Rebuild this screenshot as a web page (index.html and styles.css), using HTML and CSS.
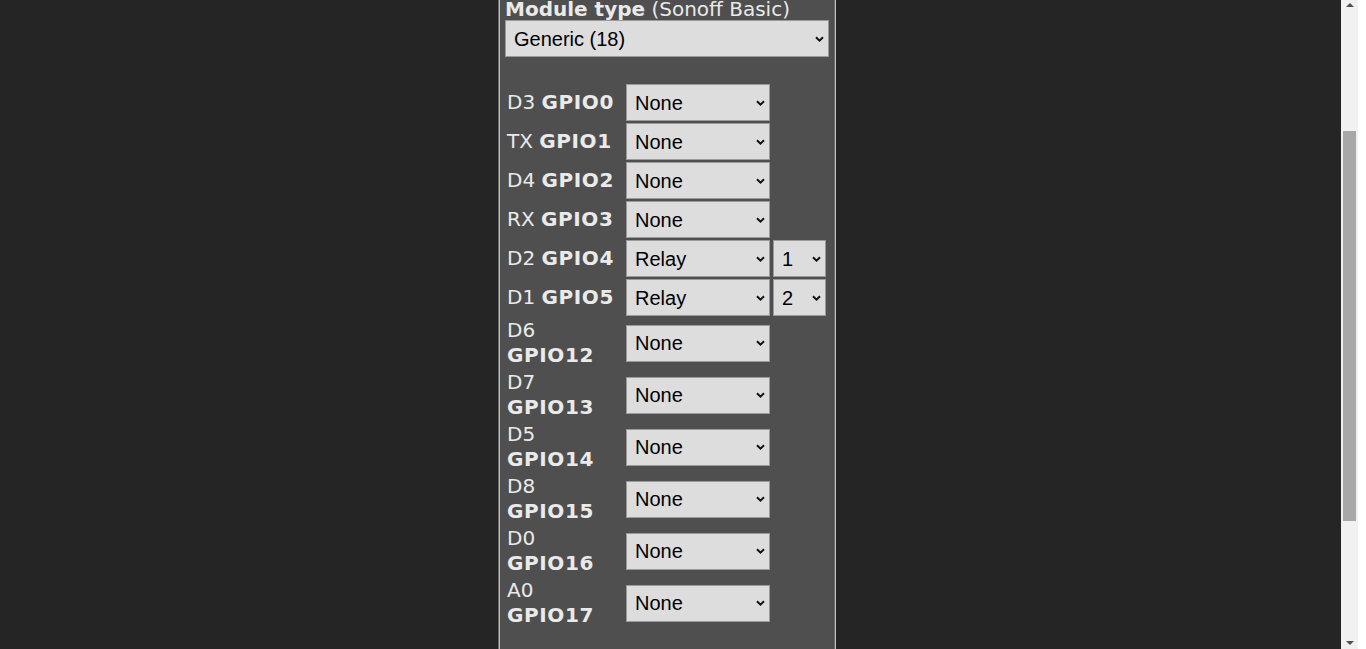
FILE: index.html
```html
<!DOCTYPE html>
<html lang="en">
<head>
<meta charset="utf-8">
<title>Sonoff Basic - Configure Module</title>
<link rel="stylesheet" href="styles.css">
</head>
<body>
<div class="page">
  <div class="wrap">
    <header class="head">
      <h3 class="head-sub">Sonoff Basic Module</h3>
      <h2 class="head-title">Sonoff</h2>
    </header>
    <fieldset class="panel">
      <legend class="legend"><b>&nbsp;Module parameters&nbsp;</b></legend>
      <div class="mt-label"><b>Module type</b> (Sonoff Basic)</div>
      <select id="mt" class="sel sel-wide"><option>Generic (18)</option></select>
      <div class="gpio">
        <div class="lbl">D3 <b>GPIO0</b></div><select class="sel"><option>None</option></select><span class="empty"></span>
        <div class="lbl">TX <b>GPIO1</b></div><select class="sel"><option>None</option></select><span class="empty"></span>
        <div class="lbl">D4 <b>GPIO2</b></div><select class="sel"><option>None</option></select><span class="empty"></span>
        <div class="lbl">RX <b>GPIO3</b></div><select class="sel"><option>None</option></select><span class="empty"></span>
        <div class="lbl">D2 <b>GPIO4</b></div><select class="sel"><option>Relay</option></select><select class="sel sel-idx"><option>1</option></select>
        <div class="lbl">D1 <b>GPIO5</b></div><select class="sel"><option>Relay</option></select><select class="sel sel-idx"><option>2</option></select>
        <div class="lbl">D6 <b>GPIO12</b></div><select class="sel"><option>None</option></select><span class="empty"></span>
        <div class="lbl">D7 <b>GPIO13</b></div><select class="sel"><option>None</option></select><span class="empty"></span>
        <div class="lbl">D5 <b>GPIO14</b></div><select class="sel"><option>None</option></select><span class="empty"></span>
        <div class="lbl">D8 <b>GPIO15</b></div><select class="sel"><option>None</option></select><span class="empty"></span>
        <div class="lbl">D0 <b>GPIO16</b></div><select class="sel"><option>None</option></select><span class="empty"></span>
        <div class="lbl">A0 <b>GPIO17</b></div><select class="sel"><option>None</option></select><span class="empty"></span>
      </div>
      <button class="btn btn-save" type="button">Save</button>
    </fieldset>
    <button class="btn btn-cfg" type="button">Configuration</button>
    <footer class="foot">Tasmota 6.5.0 by Theo Arends</footer>
  </div>
</div>
<aside class="vscroll" aria-hidden="true">
  <div class="vscroll-track">
    <span class="vscroll-arrow vscroll-up"></span>
    <span class="vscroll-thumb"></span>
    <span class="vscroll-arrow vscroll-down"></span>
  </div>
</aside>
<script src="script.js"></script>
</body>
</html>
```

FILE: styles.css
```css
html {
  background: #252525;
}
body {
  margin: 0;
  background: #252525;
  color: #eaeaea;
  font-family: "DejaVu Sans", Verdana, sans-serif;
  font-size: 20px;
}
.page {
  display: flex;
  justify-content: center;
  padding: 8px 25px 12px 0;
}
.wrap {
  width: 345px;
}
.head {
  text-align: center;
}
.head-sub {
  margin: 0 0 6px;
  font-size: 23px;
}
.head-title {
  margin: 0 0 18px;
  font-size: 30px;
}
.panel {
  width: 338px;
  box-sizing: border-box;
  margin: 0;
  padding: 0 5px 12px;
  border: 2px groove #c0c0c0;
  background: #4f4f4f;
}
.legend {
  padding: 0;
  text-align: left;
}
.mt-label {
  margin-top: 44px;
  line-height: 22px;
}
.sel {
  -webkit-appearance: none;
  appearance: none;
  display: block;
  box-sizing: border-box;
  height: 37px;
  width: 144px;
  margin: 0;
  padding: 0 20px 0 8px;
  border: 1px solid #9a9a9a;
  border-radius: 0;
  background-color: #dddddd;
  background-image: url("data:image/svg+xml,%3Csvg xmlns='http://www.w3.org/2000/svg' width='9' height='6' viewBox='0 0 9 6'%3E%3Cpath d='M1 1.2 4.5 4.6 8 1.2' fill='none' stroke='%23111' stroke-width='2'/%3E%3C/svg%3E");
  background-repeat: no-repeat;
  background-position: right 4px center;
  color: #000;
  font-family: "Liberation Sans", Arial, sans-serif;
  font-size: 20px;
}
.sel-wide {
  width: 324px;
}
.sel-idx {
  width: 53px;
}
.gpio {
  display: grid;
  grid-template-columns: 116px 144px 53px;
  column-gap: 3px;
  row-gap: 2px;
  align-items: center;
  margin-top: 27px;
  padding-left: 2px;
}
.lbl {
  line-height: 25px;
}
.lbl b {
  letter-spacing: 0.6px;
}
.btn {
  display: block;
  width: 100%;
  height: 46px;
  border: 0;
  border-radius: 5px;
  color: #faffff;
  font-family: "DejaVu Sans", Verdana, sans-serif;
  font-size: 24px;
}
.btn-save {
  margin-top: 25px;
  background: #47c266;
}
.btn-cfg {
  width: 338px;
  margin-top: 25px;
  background: #1fa3ec;
}
.foot {
  margin-top: 20px;
  padding-top: 8px;
  border-top: 1px solid #888;
  text-align: right;
  font-size: 14px;
  color: #aaa;
}

/* window scrollbar, drawn over the right edge of the viewport */
.vscroll {
  position: fixed;
  top: 0;
  right: 0;
  bottom: 0;
  width: 25px;
  background: #ffffff;
}
.vscroll-track {
  position: relative;
  width: 17px;
  height: 100%;
  background: #f1f1f1;
}
.vscroll-thumb {
  position: absolute;
  top: 131px;
  left: 2px;
  width: 13px;
  height: 390px;
  background: #a8a8a8;
}
.vscroll-arrow {
  position: absolute;
  left: 5px;
  width: 0;
  height: 0;
  border-left: 4px solid transparent;
  border-right: 4px solid transparent;
}
.vscroll-up {
  top: 3px;
  border-bottom: 4px solid #505050;
}
.vscroll-down {
  bottom: 4px;
  border-top: 4px solid #505050;
}
```

FILE: script.js
```js
window.addEventListener('DOMContentLoaded', function () {
  var el = document.getElementById('mt');
  var y = el.getBoundingClientRect().top + window.scrollY;
  window.scrollTo(0, y - 20);
});
```
